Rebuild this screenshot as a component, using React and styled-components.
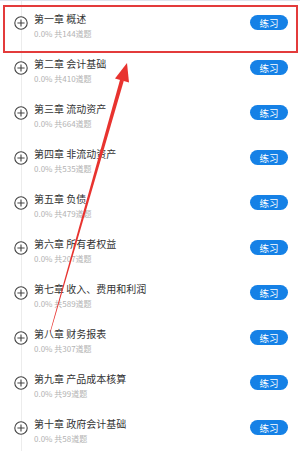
//CHAPTER LIST

//IMPORTING
import React from "react";
import styled, { createGlobalStyle } from "styled-components";

const chapters = [
  { title: "第一章 概述", count: 144 },
  { title: "第二章 会计基础", count: 410 },
  { title: "第三章 流动资产", count: 664 },
  { title: "第四章 非流动资产", count: 535 },
  { title: "第五章 负债", count: 479 },
  { title: "第六章 所有者权益", count: 207 },
  { title: "第七章 收入、费用和利润", count: 589 },
  { title: "第八章 财务报表", count: 307 },
  { title: "第九章 产品成本核算", count: 99 },
  { title: "第十章 政府会计基础", count: 58 },
];

//PLUS ICON
const PlusIcon = () => (
  <svg width="14" height="14" viewBox="0 0 14 14">
    <circle cx="7" cy="7" r="6.2" fill="#fff" stroke="#444" strokeWidth="1.1" />
    <path d="M7 3.4V10.6M3.4 7H10.6" stroke="#444" strokeWidth="1.1" />
  </svg>
);

//APP
const App = () => {
  return (
    <>
      <GlobalStyle />
      <Page>
        <List>
          {chapters.map((c, i) => (
            <Row key={i}>
              <IconWrap>
                <PlusIcon />
              </IconWrap>
              <Info>
                <Title>{c.title}</Title>
                <Sub>0.0% 共{c.count}道题</Sub>
              </Info>
              <PracticeButton>练习</PracticeButton>
            </Row>
          ))}
        </List>
        <Highlight />
        <Arrow width="300" height="463" viewBox="0 0 300 463">
          <polygon
            points="50,331 50.6,331 123.9,79.6 120.1,78.4"
            fill="#e8332f"
          />
          <polygon points="127,62 129,81.5 115,77.5" fill="#e8332f" />
        </Arrow>
      </Page>
    </>
  );
};

//GLOBAL
const GlobalStyle = createGlobalStyle`
  html, body {
    margin: 0;
    padding: 0;
    background: #fff;
  }
  body {
    font-family: "Noto Sans CJK SC", "Noto Sans", sans-serif;
  }
`;

//PAGE
const Page = styled.div`
  position: relative;
  width: 300px;
  height: 463px;
  overflow: hidden;
  background: #fff;
  border-top: 1px solid #dfe5ee;
  box-sizing: border-box;
`;

//LIST
const List = styled.div`
  position: relative;
  display: flex;
  flex-direction: column;
  &::before {
    content: "";
    position: absolute;
    left: 21px;
    top: 0;
    bottom: 0;
    width: 1px;
    background: #ececec;
  }
`;

//ROW
const Row = styled.div`
  position: relative;
  display: flex;
  align-items: flex-start;
  height: 45px;
  padding: 11px 12px 0 14px;
  box-sizing: border-box;
`;

const IconWrap = styled.div`
  display: flex;
  margin-top: 4px;
  width: 14px;
  height: 14px;
`;

const Info = styled.div`
  flex: 1;
  display: flex;
  flex-direction: column;
  margin-left: 6px;
`;

const Title = styled.div`
  font-size: 10px;
  line-height: 14px;
  color: #333;
`;

const Sub = styled.div`
  margin-top: 2px;
  font-size: 8px;
  line-height: 11px;
  color: #b3b3b3;
`;

//BUTTON
const PracticeButton = styled.div`
  display: flex;
  align-items: center;
  justify-content: center;
  margin-top: 3px;
  width: 38px;
  height: 15px;
  border-radius: 8px;
  background: #1581e6;
  color: #fff;
  font-size: 9.5px;
`;

//ANNOTATION
const Highlight = styled.div`
  position: absolute;
  left: 3px;
  top: 4px;
  width: 295px;
  height: 48px;
  border: 2px solid #e33b3b;
  box-sizing: border-box;
  pointer-events: none;
`;

const Arrow = styled.svg`
  position: absolute;
  left: 0;
  top: 0;
  pointer-events: none;
`;

export default App;
